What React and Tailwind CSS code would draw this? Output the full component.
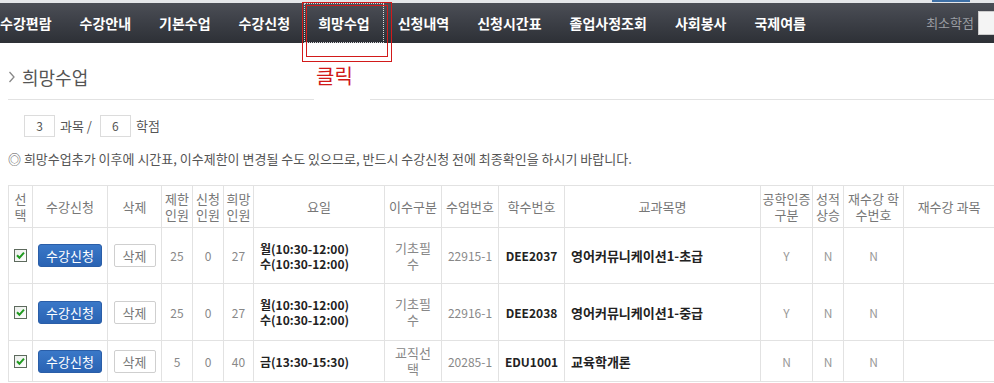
import React from "react";

const navItems = ["수강편람", "수강안내", "기본수업", "수강신청", "희망수업", "신청내역", "신청시간표", "졸업사정조회", "사회봉사", "국제여름"];

const rows = [
  { lim: "25", app: "0", hope: "27", days: ["월(10:30-12:00)", "수(10:30-12:00)"], kind: ["기초필", "수"], no: "22915-1", code: "DEE2037", name: "영어커뮤니케이션1-초급", eng: "Y", h: "h-[56px]" },
  { lim: "25", app: "0", hope: "27", days: ["월(10:30-12:00)", "수(10:30-12:00)"], kind: ["기초필", "수"], no: "22916-1", code: "DEE2038", name: "영어커뮤니케이션1-중급", eng: "Y", h: "h-[57px]" },
  { lim: "5", app: "0", hope: "40", days: ["금(13:30-15:30)"], kind: ["교직선", "택"], no: "20285-1", code: "EDU1001", name: "교육학개론", eng: "N", h: "h-[41px]" },
];

function Check() {
  return (
    <svg width="13" height="13" viewBox="0 0 13 13" className="block mx-auto">
      <defs>
        <linearGradient id="cbg" x1="0" y1="0" x2="1" y2="1">
          <stop offset="0" stopColor="#e9ece9" />
          <stop offset="1" stopColor="#ffffff" />
        </linearGradient>
      </defs>
      <rect x="0.5" y="0.5" width="12" height="12" fill="url(#cbg)" stroke="#5d6a5d" />
      <path d="M3 6.3 L5.4 8.8 L10 3.6" fill="none" stroke="#1f9a1f" strokeWidth="2" />
    </svg>
  );
}

const th = "border border-[#e2e2e2] text-[13px] leading-[16px] font-normal text-[#777] text-center align-middle";
const td = "border border-[#e2e2e2] leading-[15px] text-center align-middle";

export default function App() {
  return (
    <div className="relative w-[994px] h-[383px] overflow-hidden bg-white font-['Noto_Sans_CJK_KR',sans-serif]">
      {/* top strip */}
      <div className="h-[3px] bg-[#e4e6e9] flex">
        <div className="ml-[932px] w-[38px] h-[2px] bg-[#3d6fa6]" />
      </div>
      {/* nav */}
      <div className="h-[40px] bg-gradient-to-b from-[#4b4e56] to-[#2d3036] flex items-stretch">
        <div className="flex -ml-[14px]">
          {navItems.map((n) => (
            <div
              key={n}
              className={`px-[14px] flex items-center text-[14px] leading-[16px] font-bold text-white whitespace-nowrap ${n === "희망수업" ? "outline-dotted outline-1 -outline-offset-1 outline-white/80" : ""}`}
            >
              {n}
            </div>
          ))}
        </div>
        <div className="ml-auto flex items-center gap-[4px]">
          <span className="text-[13px] text-[#9a9da3]">최소학점</span>
          <div className="w-[16px] h-[24px] bg-[#f4f4f4] border-y border-l border-[#ccc]" />
        </div>
      </div>

      <div className="pl-[8px]">
        {/* heading */}
        <div className="h-[57px] pt-[24px] border-b border-[#e2e2e2] flex items-start">
          <div className="flex items-center h-[20px]">
            <svg width="8" height="12" viewBox="0 0 8 12" className="mr-[6px]">
              <path d="M1.5 1 L6 6 L1.5 11" fill="none" stroke="#888" strokeWidth="1.3" />
            </svg>
            <span className="text-[18px] leading-[20px] text-[#555]">희망수업</span>
          </div>
        </div>

        {/* counts */}
        <div className="mt-[15px] ml-[16px] flex items-center h-[22px] text-[13px] text-[#555]">
          <div className="w-[31px] h-[22px] border border-[#dcdcdc] flex items-center justify-center text-[12px]">3</div>
          <span className="ml-[5px]">과목 /</span>
          <div className="ml-[8px] w-[31px] h-[22px] border border-[#dcdcdc] flex items-center justify-center text-[12px]">6</div>
          <span className="ml-[5px]">학점</span>
        </div>

        {/* notice */}
        <div className="mt-[14px] text-[13px] leading-[16px] text-[#555] whitespace-nowrap">
          ◎ 희망수업추가 이후에 시간표, 이수제한이 변경될 수도 있으므로, 반드시 수강신청 전에 최종확인을 하시기 바랍니다.
        </div>

        {/* table */}
        <table className="mt-[18px] table-fixed border-collapse w-[986px]">
          <colgroup>
            <col className="w-[24px]" />
            <col className="w-[75px]" />
            <col className="w-[54px]" />
            <col className="w-[31px]" />
            <col className="w-[31px]" />
            <col className="w-[30px]" />
            <col className="w-[131px]" />
            <col className="w-[57px]" />
            <col className="w-[57px]" />
            <col className="w-[66px]" />
            <col className="w-[196px]" />
            <col className="w-[52px]" />
            <col className="w-[31px]" />
            <col className="w-[60px]" />
            <col className="w-[91px]" />
          </colgroup>
          <thead>
            <tr className="h-[42px]">
              <th className={th}>선<br />택</th>
              <th className={th}>수강신청</th>
              <th className={th}>삭제</th>
              <th className={th}>제한<br />인원</th>
              <th className={th}>신청<br />인원</th>
              <th className={th}>희망<br />인원</th>
              <th className={th}>요일</th>
              <th className={th}>이수구분</th>
              <th className={th}>수업번호</th>
              <th className={th}>학수번호</th>
              <th className={th}>교과목명</th>
              <th className={th}>공학인증<br />구분</th>
              <th className={th}>성적<br />상승</th>
              <th className={th}>재수강 학<br />수번호</th>
              <th className={th}>재수강 과목</th>
            </tr>
          </thead>
          <tbody>
            {rows.map((r, i) => (
              <tr key={i} className={r.h}>
                <td className={td}><Check /></td>
                <td className={td}>
                  <div className="mx-auto w-[64px] h-[23px] rounded-[3px] bg-gradient-to-b from-[#3a78c8] to-[#2a63b3] border border-[#2a5ea8] text-white text-[13px] leading-[21px] text-center">수강신청</div>
                </td>
                <td className={td}>
                  <div className="mx-auto w-[42px] h-[23px] rounded-[2px] bg-white border border-[#cfcfcf] text-[#777] text-[13px] leading-[21px] text-center">삭제</div>
                </td>
                <td className={`${td} text-[12px] text-[#888]`}>{r.lim}</td>
                <td className={`${td} text-[12px] text-[#888]`}>{r.app}</td>
                <td className={`${td} text-[12px] text-[#888]`}>{r.hope}</td>
                <td className={`${td} !text-left pl-[6px] text-[12px] font-bold text-[#222]`}>
                  {r.days.map((d) => (<div key={d}>{d}</div>))}
                </td>
                <td className={`${td} text-[13px] text-[#888] leading-[16px]`}>{r.kind[0]}<br />{r.kind[1]}</td>
                <td className={`${td} text-[12px] text-[#888]`}>{r.no}</td>
                <td className={`${td} text-[12px] font-bold text-[#222]`}>{r.code}</td>
                <td className={`${td} !text-left pl-[6px] text-[13px] font-bold text-[#222]`}>{r.name}</td>
                <td className={`${td} text-[12px] text-[#999]`}>{r.eng}</td>
                <td className={`${td} text-[12px] text-[#999]`}>N</td>
                <td className={`${td} text-[12px] text-[#999]`}>N</td>
                <td className={td}></td>
              </tr>
            ))}
          </tbody>
        </table>
      </div>

      {/* annotation */}
      <div className="absolute left-[302px] top-[2px] w-[90px] h-[60px] border border-[#d21a1a]" />
      <div className="absolute left-[306px] top-[5px] w-[82px] h-[52px] border border-[#d21a1a]" />
      <div className="absolute left-[314px] top-[63px] w-[56px] h-[42px] bg-white pl-[2px] pt-[1px]">
        <span className="text-[20px] leading-[24px] text-[#d01818]">클릭</span>
      </div>
    </div>
  );
}
